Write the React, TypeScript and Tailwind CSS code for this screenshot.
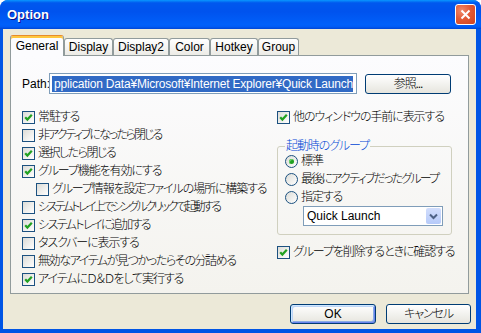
import type { ReactNode } from 'react';

const FONT = "font-['Liberation_Sans','Noto_Sans_CJK_JP',sans-serif] [font-feature-settings:'palt']";
const JP = 'tracking-[-1.1px]';

function CheckBox({ checked }: { checked?: boolean }) {
  return (
    <span className="flex h-[13px] w-[13px] shrink-0 items-center justify-center border border-[#1C5180] bg-linear-to-br from-[#DCDCD7] to-white">
      {checked && (
        <svg width="11" height="11" viewBox="0 0 11 11">
          <path d="M2.2 5.2 L4.4 7.6 L8.8 2.8" stroke="#21A121" strokeWidth="2.2" fill="none" />
        </svg>
      )}
    </span>
  );
}

function Radio({ on }: { on?: boolean }) {
  return (
    <span className="flex h-[13px] w-[13px] shrink-0 items-center justify-center rounded-full border border-[#1C5180] bg-linear-to-br from-[#DCDCD7] to-white">
      {on && <span className="h-[5px] w-[5px] rounded-full bg-[#21A121] shadow-[inset_1px_1px_0_#6FD36F]" />}
    </span>
  );
}

function Row({ checked, indent, tight, children }: { checked?: boolean; indent?: boolean; tight?: string; children: ReactNode }) {
  return (
    <div className={indent ? 'flex h-[18px] items-center gap-[3px] pl-[14px]' : 'flex h-[18px] items-center gap-[3px]'}>
      <CheckBox checked={checked} />
      <span className={`whitespace-nowrap ${tight ?? JP}`}>{children}</span>
    </div>
  );
}

function XpButton({ children, width, isDefault }: { children: ReactNode; width: string; isDefault?: boolean }) {
  return (
    <div
      className={`flex h-[20px] ${width} items-center justify-center rounded-[3px] border border-[#003C74] bg-linear-to-b from-white to-[#E6E5DE] ${
        isDefault ? 'shadow-[inset_1px_1px_0_#CEE7FF,inset_-1px_-1px_0_#6982EE,inset_2px_2px_0_#BCD4F6,inset_-2px_-2px_0_#89ADE4]' : ''
      }`}
    >
      {children}
    </div>
  );
}

const tabs = [
  { label: 'General', w: 'w-[54px]' },
  { label: 'Display', w: 'w-[49px]' },
  { label: 'Display2', w: 'w-[56px]' },
  { label: 'Color', w: 'w-[41px]' },
  { label: 'Hotkey', w: 'w-[48px]' },
  { label: 'Group', w: 'w-[41px]' },
];

const leftRows: { text: string; checked?: boolean; indent?: boolean; tight?: string }[] = [
  { text: '常駐する', checked: true },
  { text: '非アクティブになったら閉じる', tight: 'tracking-[-2px]' },
  { text: '選択したら閉じる', checked: true, tight: 'tracking-[-1.5px]' },
  { text: 'グループ機能を有効にする', checked: true },
  { text: 'グループ情報を設定ファイルの場所に構築する', indent: true },
  { text: 'システムトレイ上でシングルクリックで起動する', tight: 'tracking-[-2.6px]' },
  { text: 'システムトレイに追加する', checked: true, tight: 'tracking-[-1.6px]' },
  { text: 'タスクバーに表示する' },
  { text: '無効なアイテムが見つかったらその分詰める', tight: 'tracking-[-1.4px]' },
  { text: 'アイテムにＤ＆Ｄをして実行する', checked: true },
];

export default function App() {
  return (
    <div className={`flex h-[333px] w-[481px] flex-col overflow-hidden rounded-t-[8px] bg-[#0055E5] text-[12px] font-light leading-none text-black ${FONT}`}>
      {/* Title bar */}
      <div className="flex h-[29px] shrink-0 items-center justify-between bg-[linear-gradient(180deg,#0997FF_0%,#0058EE_10%,#0053EE_40%,#0060FA_85%,#005BF5_92%,#0046D5_100%)] pl-[7px] pr-[5px]">
        <span className="font-['Liberation_Sans',sans-serif] text-[13px] font-bold text-white [text-shadow:1px_1px_#0F1089]">
          Option
        </span>
        <div className="flex h-[21px] w-[21px] items-center justify-center rounded-[3px] border border-white bg-[radial-gradient(circle_at_30%_30%,#F08A6C_0%,#E25A36_45%,#D0431F_100%)]">
          <svg width="11" height="11" viewBox="0 0 11 11">
            <path d="M1.5 1.5 L9.5 9.5 M9.5 1.5 L1.5 9.5" stroke="white" strokeWidth="2" />
          </svg>
        </div>
      </div>

      {/* Client */}
      <div className="flex flex-1 flex-col pb-[4px] pl-[3px] pr-[5px]">
        <div className="flex flex-1 flex-col bg-[#ECE9D8] px-[7px] pt-[6px]">
          {/* Tabs */}
          <div className="flex h-[20px] items-end">
            {tabs.map((t, i) =>
              i === 0 ? (
                <div
                  key={t.label}
                  className={`relative z-10 -mb-px flex h-[21px] ${t.w} items-center justify-center rounded-t-[3px] border border-b-0 border-[#919B9C] border-t-[#E68B2C] bg-[#FCFCFE] pb-[1px] shadow-[inset_0_2px_0_#FFC73C]`}
                >
                  {t.label}
                </div>
              ) : (
                <div
                  key={t.label}
                  className={`flex h-[17px] ${t.w} items-center justify-center rounded-t-[3px] border border-b-0 border-[#919B9C] bg-linear-to-b from-white to-[#ECEBE6]`}
                >
                  {t.label}
                </div>
              ),
            )}
          </div>

          {/* Panel */}
          <div className="flex h-[239px] w-[459px] flex-col border border-[#919B9C] bg-linear-to-b from-[#FCFCFE] to-[#F4F3EE] pl-[11px] pt-[17px]">
            <div className="flex h-[21px] items-center">
              <span className="w-[27px]">Path:</span>
              <div className="flex h-[21px] w-[308px] items-center justify-end overflow-hidden border border-[#7F9DB9] bg-white pl-px pr-[3px]">
                <span className="whitespace-nowrap bg-[#316AC5] py-[1px] pl-[2px] leading-[14px] tracking-[-0.2px] text-white">
                  pplication Data¥Microsoft¥Internet Explorer¥Quick Launch
                </span>
              </div>
              <div className="ml-[8px]">
                <XpButton width="w-[86px]">
                  <span className={JP}>参照...</span>
                </XpButton>
              </div>
            </div>

            <div className="mt-[14px] flex">
              <div className="flex w-[255px] flex-col">
                {leftRows.map((r) => (
                  <Row key={r.text} checked={r.checked} indent={r.indent} tight={r.tight}>
                    {r.text}
                  </Row>
                ))}
              </div>

              <div className="flex w-[175px] flex-col">
                <Row checked>他のウィンドウの手前に表示する</Row>
                <fieldset className="mt-[14px] rounded-[3px] border border-[#D0D0BF] pb-[8px] pl-[7px]">
                  <legend className={`px-px leading-[12px] text-[#0046D5] ${JP}`}>起動時のグループ</legend>
                  <div className="flex h-[18px] items-center gap-[3px]">
                    <Radio on />
                    <span className={JP}>標準</span>
                  </div>
                  <div className="flex h-[18px] items-center gap-[3px]">
                    <Radio />
                    <span className="whitespace-nowrap tracking-[-1.8px]">最後にアクティブだったグループ</span>
                  </div>
                  <div className="flex h-[18px] items-center gap-[3px]">
                    <Radio />
                    <span className={JP}>指定する</span>
                  </div>
                  <div className="ml-[18px] flex h-[20px] w-[140px] items-center justify-between border border-[#7F9DB9] bg-white pl-[3px] pr-px">
                    <span>Quick Launch</span>
                    <span className="flex h-[16px] w-[15px] items-center justify-center rounded-[2px] bg-linear-to-b from-[#D2DEFC] to-[#B6CAF9]">
                      <svg width="9" height="7" viewBox="0 0 9 7">
                        <path d="M1 1.5 L4.5 5 L8 1.5" stroke="#4D6185" strokeWidth="2" fill="none" />
                      </svg>
                    </span>
                  </div>
                </fieldset>
                <div className="mt-[8px]">
                  <Row checked>グループを削除するときに確認する</Row>
                </div>
              </div>
            </div>
          </div>

          {/* Buttons */}
          <div className="-mr-[2px] mt-[10px] flex justify-end gap-[10px]">
            <XpButton width="w-[86px]" isDefault>
              OK
            </XpButton>
            <XpButton width="w-[85px]">
              <span className={JP}>キャンセル</span>
            </XpButton>
          </div>
        </div>
      </div>
    </div>
  );
}
